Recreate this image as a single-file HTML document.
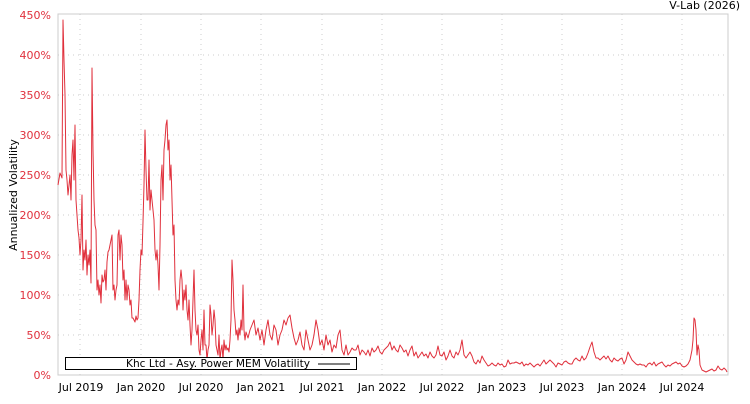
<!DOCTYPE html>
<html><head><meta charset="utf-8"><style>
body{margin:0;background:#fff;width:750px;height:400px;overflow:hidden;font-family:"DejaVu Sans","Liberation Sans",sans-serif}
</style></head><body>
<svg width="750" height="400" xmlns="http://www.w3.org/2000/svg" font-family="DejaVu Sans, Liberation Sans, sans-serif">
<rect x="58" y="14" width="670" height="361" fill="#fff" stroke="#ccc"/>
<g stroke="#ccc" stroke-dasharray="1,4">
<line x1="58" x2="728" y1="55" y2="55"/><line x1="58" x2="728" y1="95" y2="95"/><line x1="58" x2="728" y1="135" y2="135"/><line x1="58" x2="728" y1="175" y2="175"/><line x1="58" x2="728" y1="215" y2="215"/><line x1="58" x2="728" y1="255" y2="255"/><line x1="58" x2="728" y1="295" y2="295"/><line x1="58" x2="728" y1="335" y2="335"/>
<line x1="80" x2="80" y1="14" y2="375"/><line x1="141" x2="141" y1="14" y2="375"/><line x1="201" x2="201" y1="14" y2="375"/><line x1="261" x2="261" y1="14" y2="375"/><line x1="322" x2="322" y1="14" y2="375"/><line x1="382" x2="382" y1="14" y2="375"/><line x1="442" x2="442" y1="14" y2="375"/><line x1="502" x2="502" y1="14" y2="375"/><line x1="562" x2="562" y1="14" y2="375"/><line x1="622" x2="622" y1="14" y2="375"/><line x1="682" x2="682" y1="14" y2="375"/>
</g>
<polyline fill="none" stroke="#e0303c" stroke-width="1" stroke-linejoin="round" points="58,185 60,173 62,178 63,20 64,60 65,95 66,170 67,180 68,195 70,175 71,200 72,155 73,140 74,180 75,125 76,200 78,230 79,238 80,255 81,240 82,195 83,270 84,250 85,260 86,240 87,275 88,255 89,265 90,250 91,283 92,68 93,150 94,200 95,225 96,230 97,290 98,280 99,295 100,285 101,303 102,275 103,282 104,280 105,270 106,290 107,262 108,252 109,250 110,245 111,240 112,235 113,290 114,285 115,300 116,290 117,285 118,235 119,230 120,260 121,235 122,245 123,280 124,270 125,300 126,280 127,300 128,285 129,290 130,305 131,300 132,318 133,318 134,320 135,322 136,316 137,320 138,318 139,300 140,270 141,250 142,255 143,222 144,185 145,130 146,170 147,200 148,200 149,160 150,210 151,190 152,200 153,210 154,220 155,250 156,260 157,250 158,265 159,290 160,245 161,180 162,165 163,200 164,150 165,140 166,125 167,120 168,150 169,140 170,180 171,165 172,200 173,235 174,225 175,280 176,300 177,310 178,300 179,305 180,280 181,270 182,280 183,310 184,290 185,300 186,285 187,310 188,320 189,300 190,325 191,345 192,330 193,300 194,270 195,310 196,330 197,335 198,325 199,350 200,355 201,340 202,330 203,350 204,310 205,345 206,345 207,360 208,350 209,345 210,305 211,315 212,335 213,325 214,310 215,320 216,345 217,350 218,355 219,335 220,360 221,350 222,345 223,360 224,340 225,350 226,345 227,350 228,348 229,352 230,340 231,320 232,260 233,280 234,310 235,320 236,335 237,330 238,340 239,328 240,335 241,320 242,330 243,285 244,330 245,340 246,332 247,335 248,338 250,330 252,325 254,320 256,335 258,328 260,340 262,330 264,345 266,330 268,320 270,335 272,340 274,325 276,330 278,345 280,335 282,330 284,320 286,325 288,318 290,315 292,328 294,338 296,345 298,340 300,332 302,345 304,350 306,330 308,340 310,350 312,345 314,335 316,320 318,330 320,345 322,340 324,350 326,335 328,345 330,340 332,352 334,345 336,348 338,335 340,330 342,350 344,355 346,345 348,355 350,352 352,348 354,350 356,350 358,345 360,355 362,350 364,352 366,355 368,350 370,356 372,348 374,352 376,350 378,346 380,352 382,354 384,350 386,348 388,346 390,342 392,350 394,346 396,350 398,352 400,345 402,348 404,352 406,350 408,356 410,350 412,346 414,356 416,352 418,358 420,355 422,352 424,356 426,354 428,358 430,352 432,356 434,358 436,355 438,346 440,355 442,356 444,352 446,360 448,356 450,350 452,356 454,358 456,352 458,355 460,350 462,340 464,355 466,358 468,355 470,352 472,356 474,362 476,364 478,360 480,363 482,356 484,360 486,363 488,366 490,365 492,363 494,365 496,366 498,363 500,365 502,364 504,367 506,366 508,360 510,364 512,363 514,363 516,362 518,363 520,364 522,362 524,366 526,364 528,365 530,363 532,365 534,367 536,365 538,364 540,366 542,363 544,360 546,364 548,362 550,360 552,362 554,364 556,367 558,363 560,364 562,365 564,362 566,361 568,363 570,364 572,364 574,360 576,358 578,360 580,361 582,356 584,360 586,358 588,353 590,347 592,342 594,352 596,358 598,358 600,360 602,358 604,356 606,359 608,356 610,360 612,362 614,358 616,360 618,361 620,359 622,358 624,364 626,360 628,352 630,356 632,360 634,362 636,364 638,365 640,364 642,365 644,365 646,367 648,364 650,363 652,365 654,362 656,366 658,364 660,363 662,362 664,365 666,367 668,365 670,366 672,364 674,363 676,362 678,364 680,363 682,366 684,367 686,366 688,364 690,360 692,350 693,340 694,318 695,320 696,330 697,355 698,345 699,350 700,365 702,370 704,371 706,372 708,371 710,370 712,369 714,371 716,370 718,366 720,369 722,370 724,368 726,370 727,372"/>
<rect x="65.5" y="357.5" width="291" height="12" fill="#fff" stroke="#000"/>
<text x="126" y="367" font-size="11" fill="#000" textLength="184" lengthAdjust="spacingAndGlyphs">Khc Ltd - Asy. Power MEM Volatility</text>
<line x1="318" x2="350" y1="364" y2="364" stroke="#000"/>
<g font-size="11" fill="#e0303c" text-anchor="end">
<text x="51" y="19">450%</text><text x="51" y="59">400%</text><text x="51" y="99">350%</text><text x="51" y="139">300%</text><text x="51" y="179">250%</text><text x="51" y="219">200%</text><text x="51" y="259">150%</text><text x="51" y="299">100%</text><text x="51" y="339">50%</text><text x="51" y="379">0%</text>
</g>
<g font-size="11" fill="#000" text-anchor="middle">
<text x="81" y="391">Jul 2019</text><text x="141" y="391">Jan 2020</text><text x="201" y="391">Jul 2020</text><text x="261" y="391">Jan 2021</text><text x="322" y="391">Jul 2021</text><text x="382" y="391">Jan 2022</text><text x="442" y="391">Jul 2022</text><text x="502" y="391">Jan 2023</text><text x="562" y="391">Jul 2023</text><text x="622" y="391">Jan 2024</text><text x="682" y="391">Jul 2024</text>
</g>
<text x="740" y="9" font-size="11" text-anchor="end">V-Lab (2026)</text>
<text transform="translate(17,195) rotate(-90)" font-size="11" text-anchor="middle">Annualized Volatility</text>
</svg>
</body></html>
